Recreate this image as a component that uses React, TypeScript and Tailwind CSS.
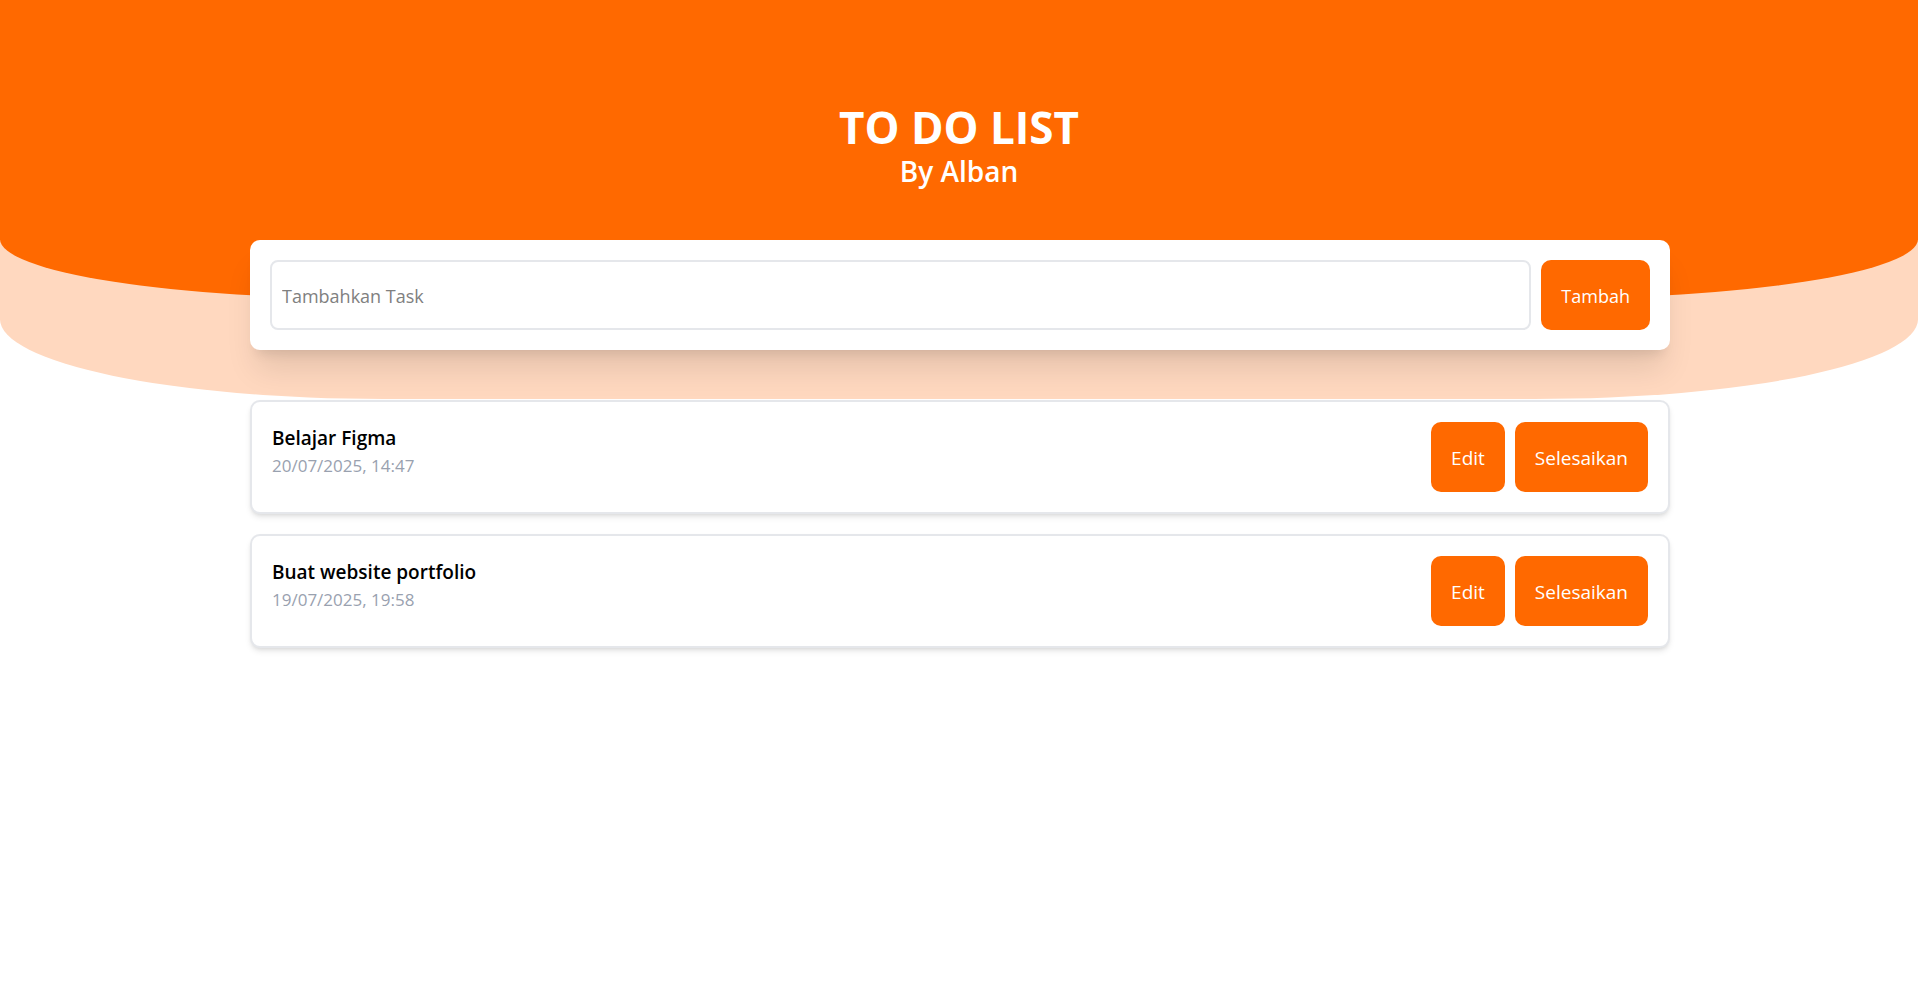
import { useState } from "react";

type Task = { id: number; title: string; date: string };

const initialTasks: Task[] = [
  { id: 1, title: "Belajar Figma", date: "20/07/2025, 14:47" },
  { id: 2, title: "Buat website portfolio", date: "19/07/2025, 19:58" },
];

const buttonClass =
  "h-[70px] shrink-0 cursor-pointer rounded-[10px] bg-[#ff6900] px-5 pt-0.5 text-white";

export default function App() {
  const [tasks] = useState(initialTasks);
  const [value, setValue] = useState("");

  return (
    <div className="relative isolate min-h-screen bg-white font-['Open_Sans','Noto_Sans',sans-serif]">
      <div className="absolute inset-x-0 top-0 -z-10 h-[399px] rounded-b-[20%] bg-[#ffd8bf]" />
      <div className="absolute inset-x-0 top-0 -z-10 h-[299px] rounded-b-[20%] bg-[#ff6900]" />

      <header className="pt-[102px] text-center text-white">
        <h1 className="text-[44px] leading-[50px] font-bold">TO DO LIST</h1>
        <p className="text-[28px] leading-[38px] font-semibold">By Alban</p>
      </header>

      <main className="mt-[50px] pr-[248px] pl-[250px]">
        <form
          className="flex gap-[10px] rounded-[10px] bg-white p-5 text-[18px] shadow-[0_25px_31px_-6px_rgba(0,0,0,0.1),0_10px_12px_-7px_rgba(0,0,0,0.1)]"
          onSubmit={(e) => e.preventDefault()}
        >
          <input
            aria-label="Tambahkan Task"
            placeholder="Tambahkan Task"
            value={value}
            onChange={(e) => setValue(e.target.value)}
            className="h-[70px] min-w-0 flex-1 rounded-lg border-2 border-gray-200 px-[10px] pt-0.5 placeholder:text-[#808080]"
          />
          <button type="submit" className={buttonClass}>
            Tambah
          </button>
        </form>

        <ul className="mt-[50px] flex flex-col gap-5 text-[19px]">
          {tasks.map((task) => (
            <li
              key={task.id}
              className="flex justify-between rounded-[10px] border-2 border-gray-200 bg-white p-5 shadow-md"
            >
              <div>
                <h2 className="leading-8 font-semibold">{task.title}</h2>
                <p className="text-[17px] leading-6 text-gray-400">{task.date}</p>
              </div>
              <div className="flex gap-[10px]">
                <button type="button" className={buttonClass}>
                  Edit
                </button>
                <button type="button" className={buttonClass}>
                  Selesaikan
                </button>
              </div>
            </li>
          ))}
        </ul>
      </main>
    </div>
  );
}
